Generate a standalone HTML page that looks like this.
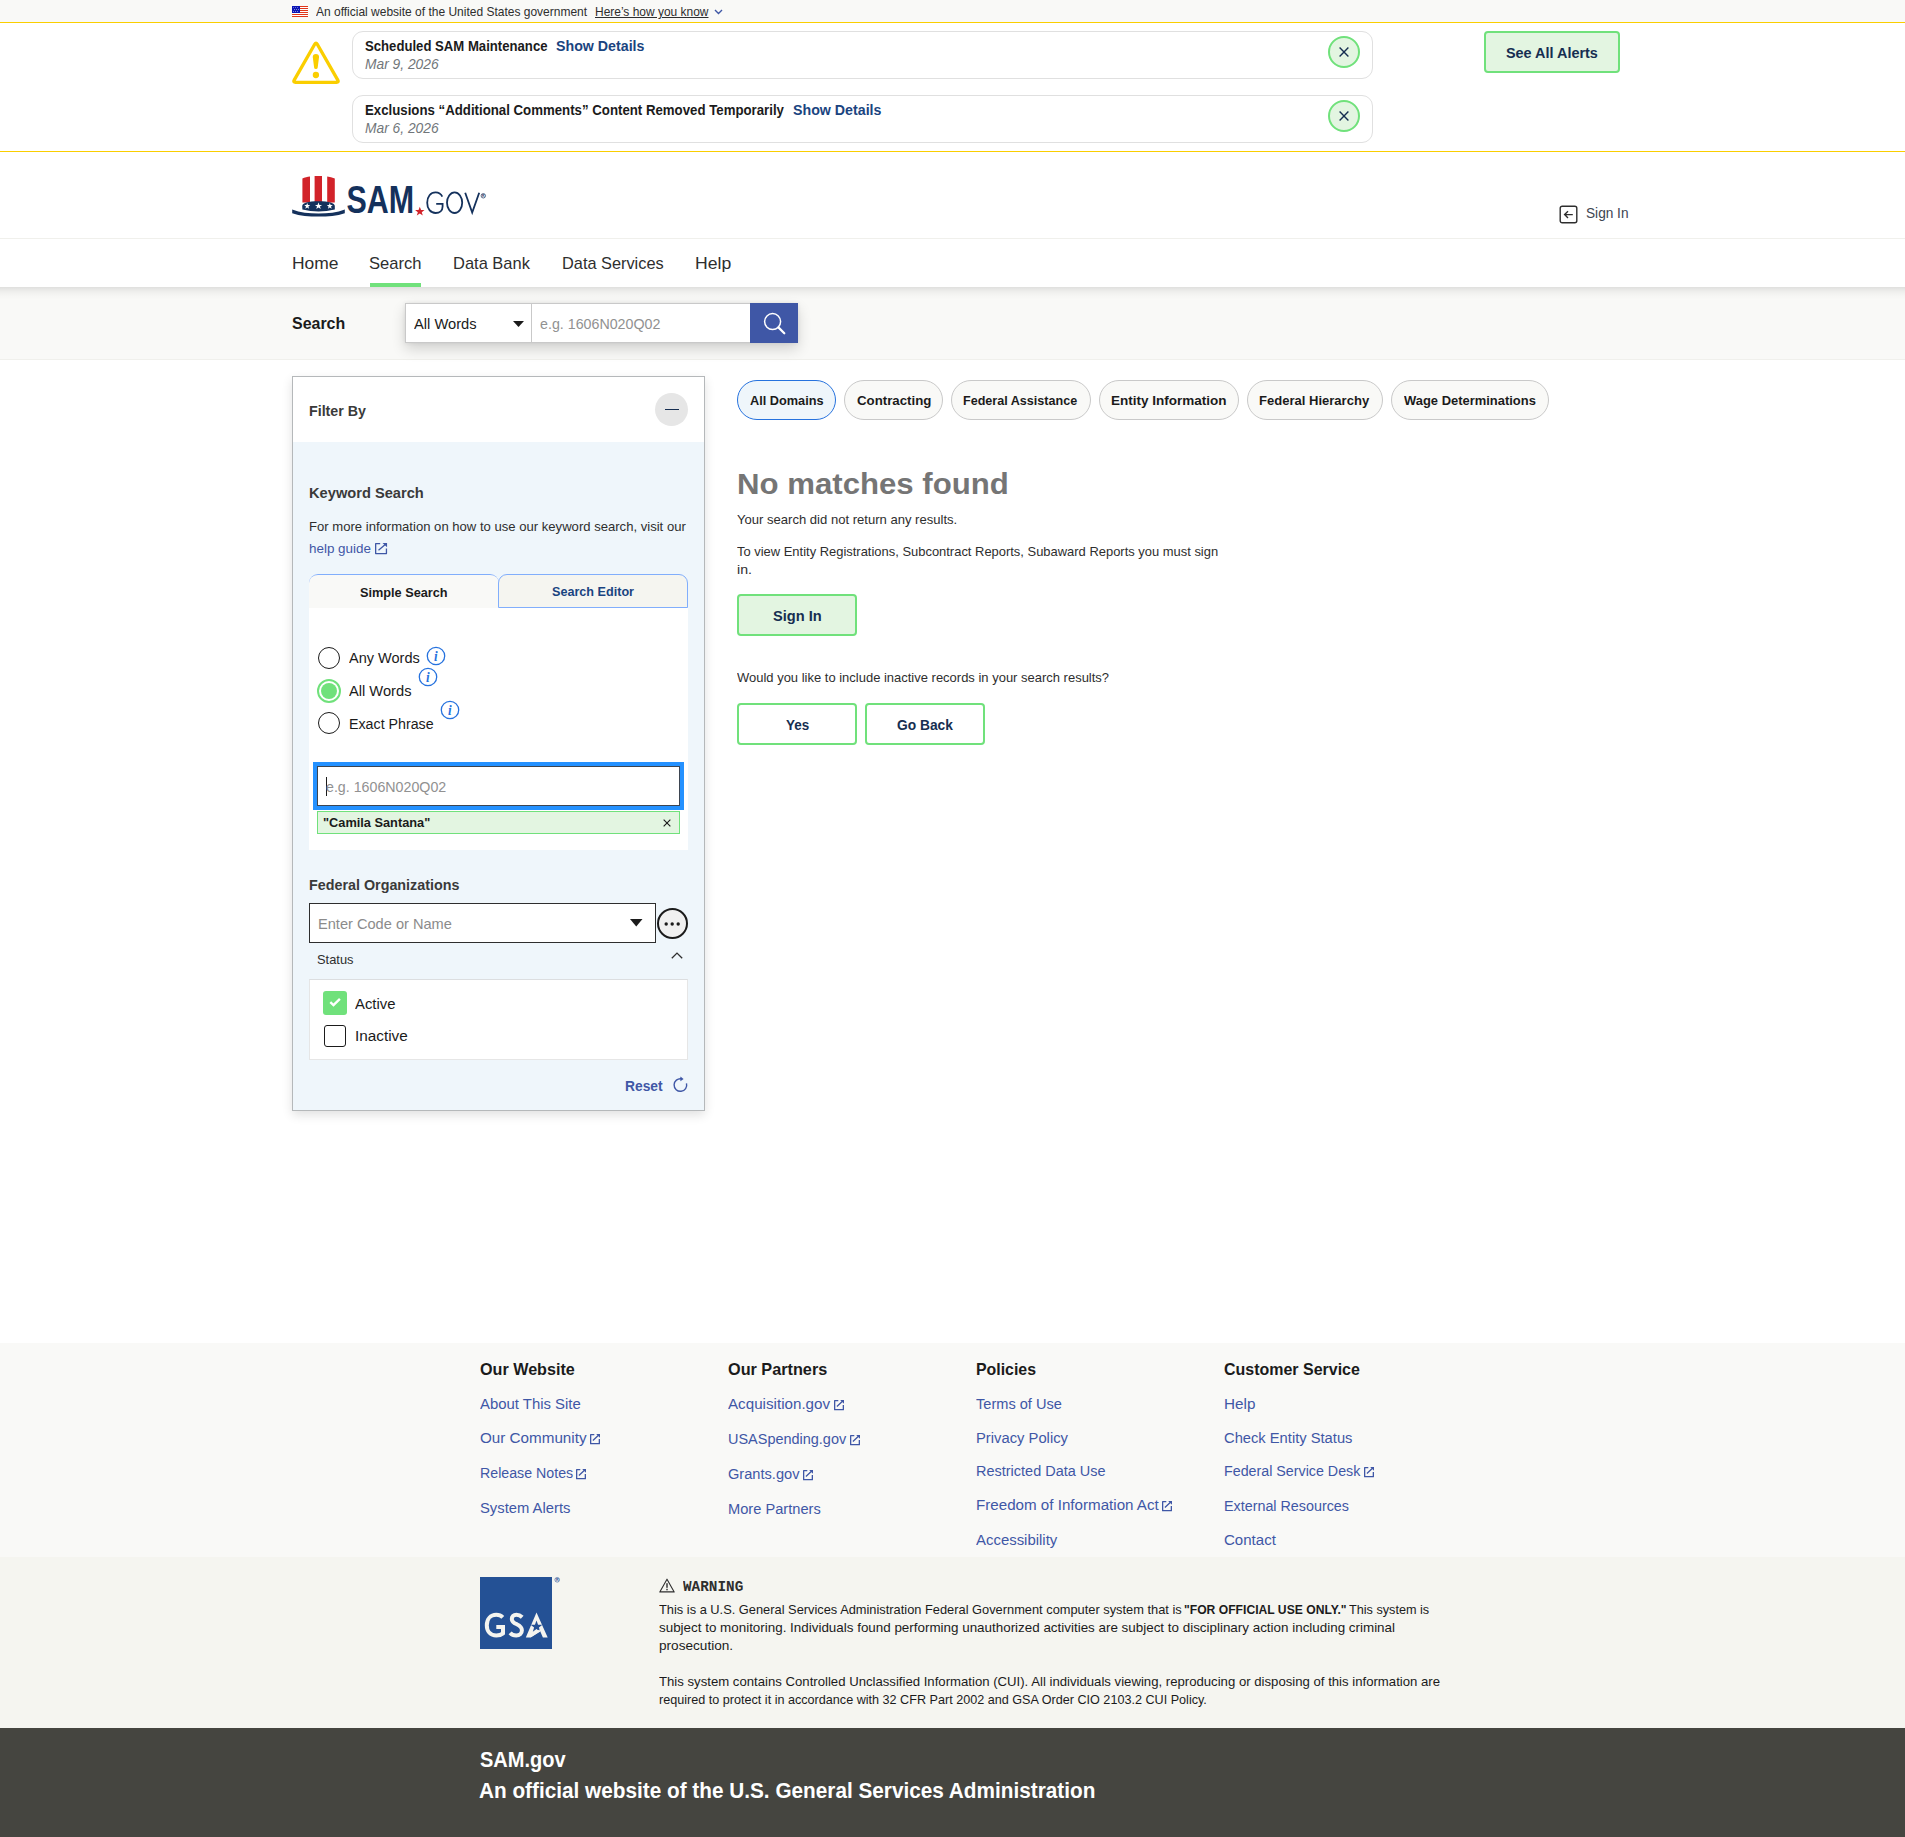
<!DOCTYPE html>
<html lang="en"><head><meta charset="utf-8"><title>SAM.gov | Search</title>
<style>
html,body{margin:0;padding:0;background:#fff;}
body{width:1905px;height:1837px;position:relative;overflow:hidden;font-family:"Liberation Sans",sans-serif;color:#1b1b1b;}
div,span,a,svg,h1,h2,p,label,button{position:absolute;box-sizing:border-box;margin:0;padding:0;}
.t{white-space:nowrap;line-height:0;transform-origin:0 50%;text-decoration:none;font-weight:400;}
svg{overflow:visible}
</style></head><body>
<div style="left:0px;top:0px;width:1905px;height:22px;background:#f9f9f7;"></div>
<svg style="left:292px;top:6px" width="16" height="11" viewBox="0 0 16 11"><rect width="16" height="11" fill="#fff"/><rect y="0" width="16" height="1" fill="#e0361a"/><rect y="2" width="16" height="1" fill="#e0361a"/><rect y="4" width="16" height="1" fill="#e0361a"/><rect y="6" width="16" height="1" fill="#e0361a"/><rect y="8" width="16" height="1" fill="#e0361a"/><rect y="10" width="16" height="1" fill="#e0361a"/><rect width="8" height="7" fill="#0b15b5"/><circle cx="1.5" cy="1.6" r=".45" fill="#fff"/><circle cx="3.5" cy="1.6" r=".45" fill="#fff"/><circle cx="5.5" cy="1.6" r=".45" fill="#fff"/><circle cx="2.5" cy="3.55" r=".45" fill="#fff"/><circle cx="4.5" cy="3.55" r=".45" fill="#fff"/><circle cx="6.5" cy="3.55" r=".45" fill="#fff"/><circle cx="1.5" cy="5.55" r=".45" fill="#fff"/><circle cx="3.5" cy="5.55" r=".45" fill="#fff"/><circle cx="5.5" cy="5.55" r=".45" fill="#fff"/></svg>
<span class="t" style="left:316.00px;top:12.0px;font-size:12.2px;color:#2e2e2e;transform:scaleX(0.9839);">An official website of the United States government</span>
<span class="t" style="left:595.02px;top:12.0px;font-size:12.2px;color:#2e2e2e;transform:scaleX(0.9815);text-decoration:underline;">Here’s how you know</span>
<svg style="left:714px;top:9px" width="9" height="6" viewBox="0 0 9 6"><path d="M1 1l3.5 3.5L8 1" fill="none" stroke="#3f57a6" stroke-width="1.4"/></svg>
<div style="left:0px;top:22px;width:1905px;height:130px;background:#fff;border-top:1px solid #face00;border-bottom:1px solid #face00;"></div>
<svg style="left:290px;top:40px" width="52" height="46" viewBox="0 0 52 46"><path d="M24.71 4.26Q26 2 27.29 4.26L47.81 40.09Q49.1 42.35 46.5 42.35H5.5Q2.9 42.35 4.19 40.09Z" fill="none" stroke="#face00" stroke-width="3.3" stroke-linejoin="round"/><path d="M22.75 17Q22.75 14 25.9 14Q29.05 14 29.05 17L27.7 27.5Q27.6 29 25.9 29Q24.2 29 24.1 27.5Z" fill="#face00"/><circle cx="25.9" cy="35" r="3.15" fill="#face00"/></svg>
<div style="left:352px;top:31px;width:1021px;height:48px;border:1px solid #e0e0e0;border-radius:11px;background:#fff;"></div>
<span class="t" style="left:365.21px;top:46.0px;font-size:14.8px;font-weight:700;transform:scaleX(0.8879);">Scheduled SAM Maintenance</span>
<span class="t" style="left:556.08px;top:46.0px;font-size:14.8px;font-weight:700;color:#1a4480;transform:scaleX(0.9602);">Show Details</span>
<span class="t" style="left:364.79px;top:64.0px;font-size:14.8px;font-style:italic;color:#71767a;transform:scaleX(0.9323);">Mar 9, 2026</span>
<div style="left:1328px;top:36px;width:32px;height:32px;border:2px solid #70e17b;border-radius:50%;background:#e3f5e1;"><svg style="left:9px;top:9px" width="10" height="10" viewBox="0 0 10 10"><path d="M0.6 0.6L9.4 9.4M9.4 0.6L0.6 9.4" stroke="#162e51" stroke-width="1.4" fill="none"/></svg></div>
<div style="left:352px;top:95px;width:1021px;height:48px;border:1px solid #e0e0e0;border-radius:11px;background:#fff;"></div>
<span class="t" style="left:364.71px;top:110.0px;font-size:14.8px;font-weight:700;transform:scaleX(0.8945);">Exclusions “Additional Comments” Content Removed Temporarily</span>
<span class="t" style="left:792.58px;top:110.0px;font-size:14.8px;font-weight:700;color:#1a4480;transform:scaleX(0.9602);">Show Details</span>
<span class="t" style="left:364.79px;top:128.0px;font-size:14.8px;font-style:italic;color:#71767a;transform:scaleX(0.9323);">Mar 6, 2026</span>
<div style="left:1328px;top:100px;width:32px;height:32px;border:2px solid #70e17b;border-radius:50%;background:#e3f5e1;"><svg style="left:9px;top:9px" width="10" height="10" viewBox="0 0 10 10"><path d="M0.6 0.6L9.4 9.4M9.4 0.6L0.6 9.4" stroke="#162e51" stroke-width="1.4" fill="none"/></svg></div>
<div style="left:1484px;top:31px;width:136px;height:42px;border:2px solid #70e17b;border-radius:4px;background:#e3f5e1;"></div>
<span class="t" style="left:1506.07px;top:53.0px;font-size:14.6px;font-weight:700;color:#162e51;transform:scaleX(0.9871);">See All Alerts</span>
<div style="left:0px;top:238px;width:1905px;height:1px;background:#f0f0ec;"></div>
<svg style="left:1559px;top:205px" width="19" height="19" viewBox="0 0 19 19"><rect x="1.2" y="1.2" width="16.6" height="16.6" rx="2" fill="none" stroke="#2e2e2e" stroke-width="1.4"/><path d="M13.8 9.6H5.6M9 6.2L5.6 9.6L9 13" fill="none" stroke="#2e2e2e" stroke-width="1.4"/></svg>
<span class="t" style="left:1585.59px;top:212.5px;font-size:15.3px;color:#3d4551;transform:scaleX(0.8925);">Sign In</span>
<span class="t" style="left:291.60px;top:263.0px;font-size:16.4px;color:#2e2e2e;transform:scaleX(1.0643);">Home</span>
<span class="t" style="left:369.44px;top:263.0px;font-size:16.4px;color:#2e2e2e;transform:scaleX(1.0107);">Search</span>
<span class="t" style="left:452.88px;top:263.0px;font-size:16.4px;color:#2e2e2e;transform:scaleX(1.0050);">Data Bank</span>
<span class="t" style="left:561.69px;top:263.0px;font-size:16.4px;color:#2e2e2e;transform:scaleX(0.9964);">Data Services</span>
<span class="t" style="left:694.59px;top:263.0px;font-size:16.4px;color:#2e2e2e;transform:scaleX(1.0730);">Help</span>
<div style="left:370px;top:283px;width:51px;height:4px;background:#70e17b;"></div>
<div style="left:0px;top:287px;width:1905px;height:73px;background:#f9f9f7;border-bottom:1px solid #f0f0ec;"><div style="left:0;top:0;width:1905px;height:13px;background:linear-gradient(rgba(0,0,0,.1),rgba(0,0,0,.045) 35%,rgba(0,0,0,.012) 70%,rgba(0,0,0,0))"></div></div>
<span class="t" style="left:292.32px;top:323.5px;font-size:16.8px;font-weight:700;transform:scaleX(0.9512);">Search</span>
<div style="left:405px;top:303px;width:393px;height:40px;background:#fff;box-shadow:0 6px 14px rgba(0,0,0,.16),0 0 4px rgba(0,0,0,.08);"></div>
<div style="left:405px;top:303px;width:127px;height:40px;border:1px solid #c9c9c9;background:#fff;"></div>
<span class="t" style="left:413.94px;top:324.0px;font-size:14.3px;transform:scaleX(1.0269);">All Words</span>
<svg style="left:513px;top:321px" width="11" height="6" viewBox="0 0 11 6"><path d="M0 0H11L5.5 6Z" fill="#1b1b1b"/></svg>
<div style="left:531px;top:303px;width:220px;height:40px;border:1px solid #c9c9c9;border-left:1px solid #c9c9c9;background:#fff;"></div>
<span class="t" style="left:539.68px;top:324.0px;font-size:14.3px;color:#919191;transform:scaleX(0.9964);">e.g. 1606N020Q02</span>
<div style="left:750px;top:303px;width:48px;height:40px;background:#3f57a6;"><svg style="left:12px;top:9px" width="26" height="26" viewBox="0 0 26 26"><circle cx="10.6" cy="9.6" r="8" fill="none" stroke="#fff" stroke-width="1.5"/><path d="M16.4 15.4L22.3 21.3" stroke="#fff" stroke-width="2.2" stroke-linecap="round"/></svg></div>
<svg style="left:290px;top:172px" width="200" height="48" viewBox="0 0 200 48">
<g fill="#d2232a">
<path d="M12.4 6.4C14.6 5.4 17.4 4.8 20 4.5V30.5H12.4Z"/>
<path d="M24.6 4H32V30H24.6Z"/>
<path d="M37.2 4.5C39.8 4.8 42.4 5.4 44.8 6.4V30.5H37.2Z"/>
</g>
<path d="M12.2 34C12.2 31 18 29.3 28.5 29.3S44.8 31 44.8 34V37.6C39 39 34 39.4 28.5 39.4S18 39 12.4 37.6Z" fill="#14315c"/>
<path d="M2.2 37.6C10 40.6 19 41.6 28.5 41.6S47 40.6 54.8 37.6V41.2C47 43.8 38 44.6 28.5 44.6S10 43.8 2.2 41.2Z" fill="#14315c"/>
<g fill="#fff"><path id="st" d="M17.2 31l.8 2.1h2.2l-1.8 1.4.7 2.2-1.9-1.3-1.9 1.3.7-2.2-1.8-1.4h2.2z"/><path d="M28.5 30.4l.95 2.5h2.6l-2.1 1.6.8 2.6-2.25-1.55-2.25 1.55.8-2.6-2.1-1.6h2.6z"/><path d="M39.8 31l.8 2.1h2.2l-1.8 1.4.7 2.2-1.9-1.3-1.9 1.3.7-2.2-1.8-1.4h2.2z"/></g>
<text x="56.5" y="41" font-family="Liberation Sans" font-weight="700" font-size="39" fill="#14315c" textLength="67.6" lengthAdjust="spacingAndGlyphs">SAM</text>
<path d="M129.8 34.8l1.25 3.3h3.5l-2.8 2.1 1.05 3.4-3-2.1-3 2.1 1.05-3.4-2.8-2.1h3.5z" fill="#d2232a"/>
<g fill="none" stroke="#14315c" stroke-width="1.8">
<path d="M152.3 24.6C151 21.9 148.6 20.4 145.6 20.4C140.6 20.4 137.2 24.5 137.2 30.7S140.6 41 145.6 41C149.6 41 152.6 38.7 152.6 34.6V31.8H146.2"/>
<ellipse cx="164.6" cy="30.7" rx="7.6" ry="10.3"/>
<path d="M175.2 20.8L182.2 40.6L189.2 20.8"/>
</g>
<circle cx="193.3" cy="23.8" r="2.2" fill="none" stroke="#14315c" stroke-width=".7"/>
<text x="192.1" y="25.1" font-family="Liberation Sans" font-weight="700" font-size="3.4" fill="#14315c">R</text>
</svg>
<div style="left:292px;top:376px;width:413px;height:735px;border:1px solid #b5b8ba;background:#eff6fb;box-shadow:0 4px 10px rgba(0,0,0,.12);"></div>
<div style="left:293px;top:377px;width:411px;height:65px;background:#fff;"></div>
<span class="t" style="left:308.56px;top:411.0px;font-size:14.2px;font-weight:700;color:#3a3a3a;transform:scaleX(1.0045);">Filter By</span>
<div style="left:655px;top:393px;width:33px;height:33px;border-radius:50%;background:#e6e6e6;"><div style="left:9.5px;top:15.5px;width:14.5px;height:1.5px;background:#162e51"></div></div>
<span class="t" style="left:308.51px;top:493.0px;font-size:14.8px;font-weight:700;color:#3a3a3a;transform:scaleX(0.9901);">Keyword Search</span>
<span class="t" style="left:309.21px;top:526.5px;font-size:13.5px;color:#2e2e2e;transform:scaleX(0.9695);">For more information on how to use our keyword search, visit our</span>
<span class="t" style="left:308.57px;top:548.5px;font-size:13.5px;color:#3f57a6;transform:scaleX(0.9949);">help guide</span>
<svg style="left:375px;top:543px" width="12.1" height="11.2" viewBox="0 0 12.1 11.2"><path d="M5.20 0.65H0.65V10.55H11.45V5.49M3.51 7.17L10.29 1.46" fill="none" stroke="#3f57a6" stroke-width="1.3" stroke-linejoin="round"/><path d="M7.50 0H12.1V4.14Z" fill="#3f57a6"/></svg>
<div style="left:309px;top:574px;width:190px;height:34px;background:#f9f9f7;border-top:1px solid #81aefc;border-radius:9px 9px 0 0;"></div>
<div style="left:498px;top:574px;width:190px;height:34px;background:#f5f5f0;border:1px solid #81aefc;border-radius:9px 9px 0 0;"></div>
<span class="t" style="left:359.65px;top:592.5px;font-size:13.6px;font-weight:700;transform:scaleX(0.9354);">Simple Search</span>
<span class="t" style="left:551.95px;top:591.5px;font-size:13.6px;font-weight:700;color:#1a4480;transform:scaleX(0.9278);">Search Editor</span>
<div style="left:309px;top:608px;width:379px;height:242px;background:#fff;"></div>
<div style="left:318px;top:647px;width:22px;height:22px;border:1.6px solid #1b1b1b;border-radius:50%;background:#fff;"></div>
<span class="t" style="left:348.94px;top:657.5px;font-size:15.1px;transform:scaleX(0.9622);">Any Words</span>
<svg style="left:426.3px;top:646.3px" width="20" height="20" viewBox="0 0 20 20"><circle cx="10" cy="10" r="8.7" fill="none" stroke="#2672de" stroke-width="1.3"/></svg>
<span class="t" style="left:434.35px;top:656.8px;font-size:14px;font-weight:700;font-style:italic;color:#2672de;font-family:'Liberation Serif',serif;transform:scaleX(0.9309);">i</span>
<div style="left:317px;top:679px;width:24px;height:24px;border:2px solid #70e17b;border-radius:50%;background:#fff;"><div style="left:2px;top:2px;width:16px;height:16px;border-radius:50%;background:#70e17b"></div></div>
<span class="t" style="left:348.94px;top:690.5px;font-size:15.1px;transform:scaleX(0.9716);">All Words</span>
<svg style="left:418.3px;top:667.2px" width="20" height="20" viewBox="0 0 20 20"><circle cx="10" cy="10" r="8.7" fill="none" stroke="#2672de" stroke-width="1.3"/></svg>
<span class="t" style="left:426.35px;top:677.7px;font-size:14px;font-weight:700;font-style:italic;color:#2672de;font-family:'Liberation Serif',serif;transform:scaleX(0.9309);">i</span>
<div style="left:318px;top:711.8px;width:22px;height:22px;border:1.6px solid #1b1b1b;border-radius:50%;background:#fff;"></div>
<span class="t" style="left:348.82px;top:723.5px;font-size:15.1px;transform:scaleX(0.9425);">Exact Phrase</span>
<svg style="left:440.2px;top:700px" width="20" height="20" viewBox="0 0 20 20"><circle cx="10" cy="10" r="8.7" fill="none" stroke="#2672de" stroke-width="1.3"/></svg>
<span class="t" style="left:448.25px;top:710.5px;font-size:14px;font-weight:700;font-style:italic;color:#2672de;font-family:'Liberation Serif',serif;transform:scaleX(0.9309);">i</span>
<div style="left:313px;top:762px;width:371px;height:48px;background:#2491ff;"></div>
<div style="left:317px;top:766px;width:363px;height:40px;background:#fff;border:1px solid #3d4551;"></div>
<div style="left:326px;top:777px;width:1px;height:19px;background:#1b1b1b;"></div>
<span class="t" style="left:325.88px;top:787.0px;font-size:14.3px;color:#919191;transform:scaleX(0.9948);">e.g. 1606N020Q02</span>
<div style="left:317px;top:810.5px;width:363px;height:23px;border:1px solid #70e17b;background:#e3f5e1;"></div>
<span class="t" style="left:323.18px;top:822.5px;font-size:13.6px;font-weight:700;transform:scaleX(0.9394);">"Camila Santana"</span>
<svg style="left:662.7px;top:819px" width="8" height="8" viewBox="0 0 10 10"><path d="M0.8 0.8L9.2 9.2M9.2 0.8L0.8 9.2" stroke="#1b1b1b" stroke-width="1.4" fill="none"/></svg>
<span class="t" style="left:308.53px;top:885.0px;font-size:14.8px;font-weight:700;color:#3a3a3a;transform:scaleX(0.9679);">Federal Organizations</span>
<div style="left:309px;top:903px;width:347px;height:39.5px;background:#fff;border:1.3px solid #2e2e2e;"></div>
<span class="t" style="left:318.29px;top:924.0px;font-size:14.3px;color:#8b8b8b;transform:scaleX(1.0213);">Enter Code or Name</span>
<svg style="left:629.5px;top:919px" width="12.5" height="7.5" viewBox="0 0 12.5 7.5"><path d="M0 0H12.5L6.25 7.5Z" fill="#1b1b1b"/></svg>
<div style="left:656.5px;top:907.5px;width:31.5px;height:31.5px;border:2px solid #1b1b1b;border-radius:50%;background:#f0f0f0;"><svg style="left:5.5px;top:12.3px" width="17" height="4" viewBox="0 0 17 4"><circle cx="2.2" cy="2" r="1.7" fill="#1b1b1b"/><circle cx="8.2" cy="2" r="1.7" fill="#1b1b1b"/><circle cx="14.2" cy="2" r="1.7" fill="#1b1b1b"/></svg></div>
<span class="t" style="left:316.91px;top:959.5px;font-size:13.6px;color:#2e2e2e;transform:scaleX(0.9467);">Status</span>
<svg style="left:670.5px;top:951.5px" width="12" height="7" viewBox="0 0 12 7"><path d="M0.8 6.3L6 1.1L11.2 6.3" fill="none" stroke="#2e2e2e" stroke-width="1.3"/></svg>
<div style="left:309px;top:979px;width:379px;height:81px;background:#fff;border:1px solid #e6e6e6;border-top:1px solid #dcdee0;"></div>
<div style="left:323px;top:991px;width:24px;height:24px;background:#70e17b;border-radius:3px;"><svg style="left:0;top:0" width="24" height="24" viewBox="0 0 24 24"><path d="M7.3 11.1L10.5 14.1L16.9 7.9" fill="none" stroke="#fff" stroke-width="2.4"/></svg></div>
<span class="t" style="left:354.94px;top:1003.5px;font-size:15.1px;transform:scaleX(0.9842);">Active</span>
<div style="left:324px;top:1024.5px;width:22px;height:22px;border:1.5px solid #1b1b1b;border-radius:3px;background:#fff;"></div>
<span class="t" style="left:354.60px;top:1035.5px;font-size:15.1px;transform:scaleX(1.0147);">Inactive</span>
<span class="t" style="left:625.07px;top:1086.0px;font-size:14.8px;font-weight:700;color:#3f57a6;transform:scaleX(0.9340);">Reset</span>
<svg style="left:671.5px;top:1075.5px" width="16" height="17" viewBox="0 0 16 17"><path d="M14.49 7.37A6.3 6.3 0 1 1 9.49 2.8" fill="none" stroke="#3f57a6" stroke-width="1.4"/><path d="M8.4 0.5L11.6 3L8.4 5.3Z" fill="#3f57a6"/></svg>
<div style="left:737px;top:380px;width:98.5px;height:40px;border:1px solid #2672de;border-radius:20px;background:#eff6fb;"></div>
<span class="t" style="left:749.99px;top:400.5px;font-size:13px;font-weight:700;transform:scaleX(0.9791);">All Domains</span>
<div style="left:844px;top:380px;width:98.5px;height:40px;border:1px solid #c9c9c9;border-radius:20px;background:#f9f9f7;"></div>
<span class="t" style="left:856.79px;top:400.5px;font-size:13px;font-weight:700;transform:scaleX(1.0201);">Contracting</span>
<div style="left:951px;top:380px;width:139.5px;height:40px;border:1px solid #c9c9c9;border-radius:20px;background:#f9f9f7;"></div>
<span class="t" style="left:963.45px;top:400.5px;font-size:13px;font-weight:700;transform:scaleX(0.9679);">Federal Assistance</span>
<div style="left:1098.7px;top:380px;width:140.0px;height:40px;border:1px solid #c9c9c9;border-radius:20px;background:#f9f9f7;"></div>
<span class="t" style="left:1111.09px;top:400.5px;font-size:13px;font-weight:700;transform:scaleX(1.0387);">Entity Information</span>
<div style="left:1247px;top:380px;width:135.5px;height:40px;border:1px solid #c9c9c9;border-radius:20px;background:#f9f9f7;"></div>
<span class="t" style="left:1259.42px;top:400.5px;font-size:13px;font-weight:700;transform:scaleX(1.0030);">Federal Hierarchy</span>
<div style="left:1390.7px;top:380px;width:158.0px;height:40px;border:1px solid #c9c9c9;border-radius:20px;background:#f9f9f7;"></div>
<span class="t" style="left:1404.00px;top:400.5px;font-size:13px;font-weight:700;transform:scaleX(0.9956);">Wage Determinations</span>
<h1 class="t" style="left:737.15px;top:483.0px;font-size:30.4px;font-weight:700;color:#757575;transform:scaleX(1.0255);">No matches found</h1>
<span class="t" style="left:736.99px;top:519.5px;font-size:13px;color:#2e2e2e;transform:scaleX(1.0044);">Your search did not return any results.</span>
<span class="t" style="left:736.99px;top:551.5px;font-size:13px;color:#2e2e2e;transform:scaleX(0.9953);">To view Entity Registrations, Subcontract Reports, Subaward Reports you must sign</span>
<span class="t" style="left:736.85px;top:569.5px;font-size:13px;color:#2e2e2e;transform:scaleX(1.0866);">in.</span>
<div style="left:737px;top:594px;width:120px;height:42px;border:2px solid #70e17b;border-radius:4px;background:#e3f5e1;"></div>
<span class="t" style="left:773.06px;top:616.0px;font-size:14.6px;font-weight:700;color:#162e51;transform:scaleX(1.0013);">Sign In</span>
<span class="t" style="left:737.24px;top:677.5px;font-size:13px;color:#2e2e2e;transform:scaleX(0.9985);">Would you like to include inactive records in your search results?</span>
<div style="left:737px;top:703px;width:120px;height:42px;border:2px solid #70e17b;border-radius:4px;background:#fff;"></div>
<span class="t" style="left:785.77px;top:725.0px;font-size:14.6px;font-weight:700;color:#162e51;transform:scaleX(0.9231);">Yes</span>
<div style="left:865px;top:703px;width:120px;height:42px;border:2px solid #70e17b;border-radius:4px;background:#fff;"></div>
<span class="t" style="left:896.97px;top:725.0px;font-size:14.6px;font-weight:700;color:#162e51;transform:scaleX(0.9447);">Go Back</span>
<div style="left:0px;top:1343px;width:1905px;height:214px;background:#f9f9f7;"></div>
<div style="left:0px;top:1557px;width:1905px;height:171px;background:#f5f5f0;"></div>
<div style="left:0px;top:1728px;width:1905px;height:109px;background:#454540;"></div>
<span class="t" style="left:479.62px;top:1369.0px;font-size:16.4px;font-weight:700;transform:scaleX(0.9849);">Our Website</span>
<span class="t" style="left:727.82px;top:1369.0px;font-size:16.4px;font-weight:700;transform:scaleX(0.9904);">Our Partners</span>
<span class="t" style="left:975.97px;top:1369.0px;font-size:16.4px;font-weight:700;transform:scaleX(0.9686);">Policies</span>
<span class="t" style="left:1223.83px;top:1369.0px;font-size:16.4px;font-weight:700;transform:scaleX(0.9746);">Customer Service</span>
<span class="t" style="left:479.94px;top:1403.5px;font-size:15.2px;color:#3f57a6;transform:scaleX(0.9810);">About This Site</span>
<span class="t" style="left:479.81px;top:1437.5px;font-size:15.2px;color:#3f57a6;transform:scaleX(1.0017);">Our Community</span>
<svg style="left:590.1999999999999px;top:1433.6px" width="10" height="10.3" viewBox="0 0 10 10.3"><path d="M4.30 0.65H0.65V9.65H9.35V5.05M2.90 6.59L8.50 1.34" fill="none" stroke="#3f57a6" stroke-width="1.3" stroke-linejoin="round"/><path d="M6.20 0H10V3.81Z" fill="#3f57a6"/></svg>
<span class="t" style="left:480.13px;top:1472.5px;font-size:15.2px;color:#3f57a6;transform:scaleX(0.9355);">Release Notes</span>
<svg style="left:576.4px;top:1468.6px" width="10" height="10.3" viewBox="0 0 10 10.3"><path d="M4.30 0.65H0.65V9.65H9.35V5.05M2.90 6.59L8.50 1.34" fill="none" stroke="#3f57a6" stroke-width="1.3" stroke-linejoin="round"/><path d="M6.20 0H10V3.81Z" fill="#3f57a6"/></svg>
<span class="t" style="left:480.13px;top:1507.5px;font-size:15.2px;color:#3f57a6;transform:scaleX(0.9735);">System Alerts</span>
<span class="t" style="left:728.14px;top:1403.5px;font-size:15.2px;color:#3f57a6;transform:scaleX(0.9994);">Acquisition.gov</span>
<svg style="left:834.1999999999999px;top:1399.6px" width="10" height="10.3" viewBox="0 0 10 10.3"><path d="M4.30 0.65H0.65V9.65H9.35V5.05M2.90 6.59L8.50 1.34" fill="none" stroke="#3f57a6" stroke-width="1.3" stroke-linejoin="round"/><path d="M6.20 0H10V3.81Z" fill="#3f57a6"/></svg>
<span class="t" style="left:728.37px;top:1438.5px;font-size:15.2px;color:#3f57a6;transform:scaleX(0.9522);">USASpending.gov</span>
<svg style="left:850.1999999999999px;top:1434.6px" width="10" height="10.3" viewBox="0 0 10 10.3"><path d="M4.30 0.65H0.65V9.65H9.35V5.05M2.90 6.59L8.50 1.34" fill="none" stroke="#3f57a6" stroke-width="1.3" stroke-linejoin="round"/><path d="M6.20 0H10V3.81Z" fill="#3f57a6"/></svg>
<span class="t" style="left:728.08px;top:1473.5px;font-size:15.2px;color:#3f57a6;transform:scaleX(0.9619);">Grants.gov</span>
<svg style="left:802.9px;top:1469.6px" width="10" height="10.3" viewBox="0 0 10 10.3"><path d="M4.30 0.65H0.65V9.65H9.35V5.05M2.90 6.59L8.50 1.34" fill="none" stroke="#3f57a6" stroke-width="1.3" stroke-linejoin="round"/><path d="M6.20 0H10V3.81Z" fill="#3f57a6"/></svg>
<span class="t" style="left:728.30px;top:1508.5px;font-size:15.2px;color:#3f57a6;transform:scaleX(0.9636);">More Partners</span>
<span class="t" style="left:976.00px;top:1403.5px;font-size:15.2px;color:#3f57a6;transform:scaleX(0.9600);">Terms of Use</span>
<span class="t" style="left:976.08px;top:1437.5px;font-size:15.2px;color:#3f57a6;transform:scaleX(0.9727);">Privacy Policy</span>
<span class="t" style="left:976.11px;top:1470.5px;font-size:15.2px;color:#3f57a6;transform:scaleX(0.9534);">Restricted Data Use</span>
<span class="t" style="left:976.05px;top:1504.5px;font-size:15.2px;color:#3f57a6;transform:scaleX(0.9977);">Freedom of Information Act</span>
<svg style="left:1162.2px;top:1500.6px" width="10" height="10.3" viewBox="0 0 10 10.3"><path d="M4.30 0.65H0.65V9.65H9.35V5.05M2.90 6.59L8.50 1.34" fill="none" stroke="#3f57a6" stroke-width="1.3" stroke-linejoin="round"/><path d="M6.20 0H10V3.81Z" fill="#3f57a6"/></svg>
<span class="t" style="left:975.94px;top:1539.5px;font-size:15.2px;color:#3f57a6;transform:scaleX(0.9828);">Accessibility</span>
<span class="t" style="left:1224.24px;top:1403.5px;font-size:15.2px;color:#3f57a6;transform:scaleX(1.0043);">Help</span>
<span class="t" style="left:1224.07px;top:1437.5px;font-size:15.2px;color:#3f57a6;transform:scaleX(0.9691);">Check Entity Status</span>
<span class="t" style="left:1224.33px;top:1470.5px;font-size:15.2px;color:#3f57a6;transform:scaleX(0.9393);">Federal Service Desk</span>
<svg style="left:1364.2px;top:1466.6px" width="10" height="10.3" viewBox="0 0 10 10.3"><path d="M4.30 0.65H0.65V9.65H9.35V5.05M2.90 6.59L8.50 1.34" fill="none" stroke="#3f57a6" stroke-width="1.3" stroke-linejoin="round"/><path d="M6.20 0H10V3.81Z" fill="#3f57a6"/></svg>
<span class="t" style="left:1224.32px;top:1505.5px;font-size:15.2px;color:#3f57a6;transform:scaleX(0.9430);">External Resources</span>
<span class="t" style="left:1224.06px;top:1539.5px;font-size:15.2px;color:#3f57a6;transform:scaleX(0.9903);">Contact</span>
<svg style="left:480px;top:1577px" width="82" height="72" viewBox="0 0 82 72">
<rect width="72" height="72" fill="#245195"/>
<g fill="none" stroke="#f4f4ef" stroke-width="4">
<path d="M22.8 40.3C21 38.5 18.8 37.8 16.3 37.8C10.5 37.8 6.8 42.1 6.8 48.2C6.8 54.4 10.5 58.5 16.3 58.5C18.9 58.5 21.3 57.8 23 56.4V49.9H16.3"/>
<path d="M42.2 40.2C40.5 38.6 38.7 37.8 36.4 37.8C33.4 37.8 31.8 39.6 31.8 41.9C31.8 44.5 33.6 45.8 36.8 47.2C40.2 48.8 41.9 50.2 41.9 53.3C41.9 56.4 39.6 58.5 36.2 58.5C33.8 58.5 31.6 57.6 30.1 55.9"/>
</g>
<path d="M56.5 35.6L67.7 60.5H62.9L60.2 54.2L50.6 60.5H45.8Z" fill="#f4f4ef"/>
<path d="M56.5 43.6l1.55 4.1h4.35l-3.5 2.7 1.3 4.3-3.7-2.6-3.7 2.6 1.3-4.3-3.5-2.7h4.35z" fill="#245195"/>
<path d="M51.6 57.4L59.4 52.4L60.3 54.4L50.6 60.5Z" fill="#f4f4ef"/>
<circle cx="77.2" cy="2.8" r="2.3" fill="none" stroke="#245195" stroke-width=".6"/><text x="75.9" y="4.2" font-size="3.6" font-weight="700" fill="#245195" font-family="Liberation Sans">R</text>
</svg>
<svg style="left:659px;top:1577.5px" width="16" height="15" viewBox="0 0 16 15"><path d="M8 1.2L15.2 13.9H0.8Z" fill="none" stroke="#2e2e2e" stroke-width="1.1" stroke-linejoin="round"/><rect x="7.3" y="5.2" width="1.4" height="4.6" fill="#2e2e2e"/><rect x="7.3" y="10.8" width="1.4" height="1.5" fill="#2e2e2e"/></svg>
<span class="t" style="left:683.30px;top:1587.0px;font-size:14.4px;font-weight:700;color:#2e2e2e;font-family:'Liberation Mono',monospace;transform:scaleX(0.9969);">WARNING</span>
<span class="t" style="left:658.99px;top:1609.5px;font-size:13px;transform:scaleX(0.9870);">This is a U.S. General Services Administration Federal Government computer system that is</span>
<span class="t" style="left:1184.18px;top:1609.5px;font-size:13px;font-weight:700;transform:scaleX(0.9337);">"FOR OFFICIAL USE ONLY."</span>
<span class="t" style="left:1349.20px;top:1609.5px;font-size:13px;transform:scaleX(0.9740);">This system is</span>
<span class="t" style="left:659.11px;top:1627.5px;font-size:13px;transform:scaleX(1.0309);">subject to monitoring. Individuals found performing unauthorized activities are subject to disciplinary action including criminal</span>
<span class="t" style="left:658.95px;top:1645.5px;font-size:13px;transform:scaleX(1.0463);">prosecution.</span>
<span class="t" style="left:658.98px;top:1681.5px;font-size:13px;transform:scaleX(1.0121);">This system contains Controlled Unclassified Information (CUI). All individuals viewing, reproducing or disposing of this information are</span>
<span class="t" style="left:658.95px;top:1699.5px;font-size:13px;transform:scaleX(0.9700);">required to protect it in accordance with 32 CFR Part 2002 and GSA Order CIO 2103.2 CUI Policy.</span>
<span class="t" style="left:479.73px;top:1759.5px;font-size:21.8px;font-weight:700;color:#fff;transform:scaleX(0.9183);">SAM.gov</span>
<span class="t" style="left:479.46px;top:1790.5px;font-size:21.8px;font-weight:700;color:#fff;transform:scaleX(0.9523);">An official website of the U.S. General Services Administration</span>
</body></html>
